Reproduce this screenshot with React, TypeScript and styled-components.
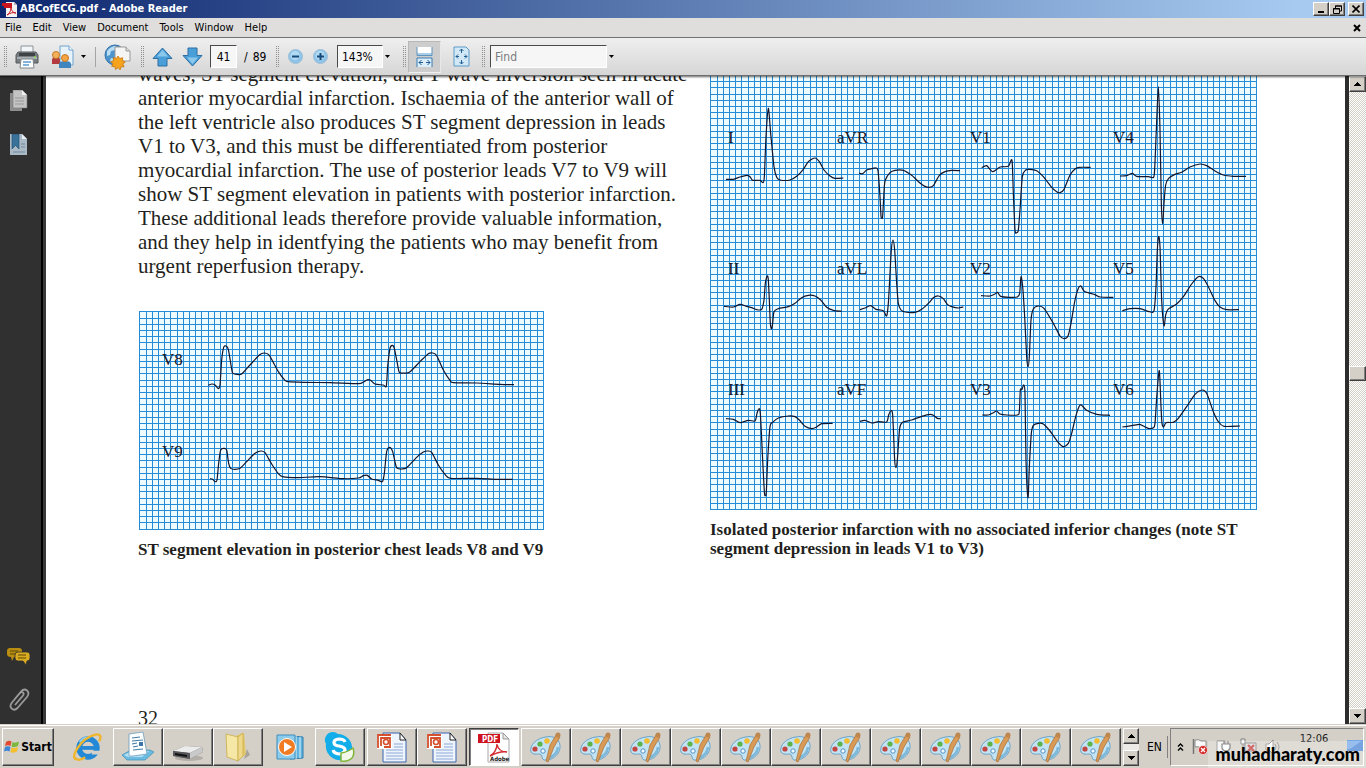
import React from 'react';
import styled, { createGlobalStyle, css } from 'styled-components';

const ui = `'DejaVu Sans Condensed', 'DejaVu Sans', Tahoma, sans-serif`;
const serif = `'Liberation Serif', 'Times New Roman', serif`;

const Global = createGlobalStyle`
  * { box-sizing: border-box; }
  html, body, #root { height: 100%; }
  body { margin: 0; font-family: ${ui}; font-size: 11px; color: #000; overflow: hidden; }
  button, input { font: inherit; color: inherit; margin: 0; padding: 0; border: 0; border-radius: 0; background: none; }
  svg { display: block; flex: none; }
`;

const raised = css`
  background: #d4d0c8;
  border: 1px solid;
  border-color: #fff #404040 #404040 #fff;
  box-shadow: inset -1px -1px 0 #808080;
`;

const Shell = styled.div`
  display: flex;
  flex-direction: column;
  height: 100vh;
`;

const TitleBar = styled.header`
  display: flex;
  align-items: center;
  height: 18px;
  flex: none;
  padding: 0 2px;
  gap: 2px;
  color: #fff;
  background: linear-gradient(90deg, #0d276f 0%, #a6caf0 95%);
`;

const Title = styled.h1`
  flex: 1;
  margin: 0;
  font-size: 11px;
  line-height: 18px;
  font-weight: bold;
`;

const WindowButton = styled.button<{ $apart?: boolean }>`
  ${raised}
  display: grid;
  place-items: center;
  width: 16px;
  height: 14px;
  margin-left: ${(p) => (p.$apart ? 1 : -2)}px;
`;

const MenuBar = styled.nav`
  display: flex;
  align-items: center;
  height: 20px;
  flex: none;
  padding: 0 5px;
  gap: 11px;
  background: #dfdedd;
  border-bottom: 1px solid #77787a;
`;

const MenuItem = styled.button`
  font-size: 11px;
  line-height: 16px;
`;

const CloseDocument = styled.button`
  margin-left: auto;
`;

const ToolBar = styled.div`
  position: relative;
  z-index: 1;
  display: flex;
  align-items: center;
  height: 38px;
  flex: none;
  padding-left: 3px;
  background: linear-gradient(#efefef, #d6d6d6);
  border-bottom: 1px solid #6d6d6d;
  box-shadow: 0 1px 2px rgba(0, 0, 0, 0.6);
`;

const Grip = styled.span<{ $before?: number; $after?: number }>`
  width: 4px;
  height: 22px;
  margin: 0 ${(p) => p.$after ?? 0}px 0 ${(p) => p.$before ?? 0}px;
  background: conic-gradient(#8e8e8e 25%, transparent 0) 0 0 / 2px 2px;
`;

const Divider = styled.span`
  width: 1px;
  height: 20px;
  margin: 0 8px;
  background: #a4a4a4;
`;

const Tool = styled.button<{ $width: number; $pressed?: boolean }>`
  display: grid;
  place-items: center;
  width: ${(p) => p.$width}px;
  height: 32px;
  ${(p) =>
    p.$pressed &&
    css`
      background: #cdcdcd;
      border: 1px solid;
      border-color: #b8b8b8 #e8e8e8 #f0f0f0 #b8b8b8;
    `}
`;

const Field = styled.input<{ $width: number; $center?: boolean; $before?: number }>`
  width: ${(p) => p.$width}px;
  height: 23px;
  margin-left: ${(p) => p.$before ?? 0}px;
  padding: 0 4px;
  text-align: ${(p) => (p.$center ? 'center' : 'left')};
  font-size: 12px;
  background: #f6f6f6;
  border: 1px solid;
  border-color: #4a4a4a #fff #fff #4a4a4a;
  &::placeholder { color: #7c7c7c; opacity: 1; }
`;

const PageCount = styled.span`
  display: flex;
  gap: 5px;
  width: 25px;
  margin: 0 6px 0 7px;
  font-size: 12px;
  line-height: 16px;
  white-space: nowrap;
`;

const Workspace = styled.div`
  display: flex;
  flex: 1;
  min-height: 0;
`;

const SidePanel = styled.aside`
  display: flex;
  flex-direction: column;
  align-items: center;
  width: 46px;
  flex: none;
  padding: 14px 8px 12px 0;
  gap: 22px;
  background: linear-gradient(90deg, #303030 41px, #000 41px 43px, #3a3a3a 43px);
`;

const PanelButton = styled.button<{ $bottom?: boolean }>`
  ${(p) => p.$bottom && 'margin-top: auto;'}
`;

const Page = styled.main`
  display: flex;
  align-items: flex-start;
  flex: 1;
  min-width: 0;
  padding-left: 92px;
  overflow: hidden;
  background: #fff;
  border-right: 4px solid #2d2d2d;
  font-family: ${serif};
  color: #231f20;
`;

const Column = styled.section<{ $width: number }>`
  width: ${(p) => p.$width}px;
  flex: none;
`;

const BodyText = styled.p`
  margin: -14px 0 33px;
  font-size: 21px;
  line-height: 24px;
  white-space: nowrap;
`;

const Figure = styled.figure<{ $indent?: number }>`
  margin: 0;
  svg { margin-left: ${(p) => p.$indent ?? 0}px; }
`;

const Caption = styled.figcaption`
  margin-top: 10px;
  font-size: 17px;
  line-height: 19px;
  font-weight: bold;
  white-space: nowrap;
`;

const Folio = styled.p`
  margin: 147px 0 0;
  font-size: 20px;
  line-height: 24px;
`;

const ScrollBar = styled.div`
  display: flex;
  flex-direction: column;
  width: 17px;
  flex: none;
  background: repeating-conic-gradient(#fff 0 25%, #d4d0c8 0 50%) 0 0 / 2px 2px;
`;

const ScrollButton = styled.button`
  ${raised}
  display: grid;
  place-items: center;
  height: 16px;
  flex: none;
`;

const Track = styled.div<{ $grow: number }>`
  flex: ${(p) => p.$grow};
`;

const Thumb = styled.div`
  ${raised}
  height: 15px;
`;

const TaskBar = styled.footer`
  position: relative;
  display: flex;
  align-items: center;
  height: 44px;
  flex: none;
  padding: 0 2px;
  gap: 2px;
  background: #d4d0c8;
  border-top: 1px solid #d4d0c8;
  box-shadow: inset 0 1px 0 #fff;
`;

const StartButton = styled.button`
  ${raised}
  display: flex;
  align-items: center;
  justify-content: center;
  gap: 1px;
  flex: none;
  width: 52px;
  height: 38px;
  margin-right: 7px;
  font-size: 12px;
  font-weight: bold;
`;

const Task = styled.button<{ $look?: 'flat' | 'active' }>`
  ${raised}
  display: grid;
  place-items: center;
  width: 50px;
  min-width: 0;
  height: 38px;
  ${(p) => p.$look === 'flat' && 'background: none; border-color: transparent; box-shadow: none;'}
  ${(p) =>
    p.$look === 'active' &&
    'background: #fff; border-color: #404040 #fff #fff #404040; box-shadow: inset 1px 1px 0 #808080;'}
`;

const TaskGroup = styled.div`
  display: flex;
  min-width: 0;
`;

const Spinner = styled.div`
  display: flex;
  flex-direction: column;
  justify-content: space-between;
  flex: none;
  width: 16px;
  height: 38px;
  background: #eceae6;
`;

const Language = styled.span`
  flex: none;
  width: 27px;
  padding-left: 6px;
  font-size: 12px;
  line-height: 22px;
  border-right: 1px solid #808080;
`;

const Tray = styled.div`
  display: flex;
  align-items: center;
  flex: 1 0 194px;
  height: 38px;
  padding-left: 6px;
  gap: 8px;
  border: 1px solid;
  border-color: #808080 #fff #fff #808080;
`;

const Clock = styled.time`
  flex: 1;
  align-self: flex-start;
  text-align: center;
  font-size: 11px;
  line-height: 20px;
  color: #222;
`;

const Watermark = styled.div`
  position: absolute;
  right: 0;
  bottom: 0;
  width: 158px;
  height: 27px;
  padding-right: 6px;
  text-align: right;
  font-family: Lato, sans-serif;
  font-size: 18px;
  font-weight: 900;
  line-height: 27px;
  color: #000;
  background: rgba(255, 255, 255, 0.25);
`;

/* ---------- ECG charts ---------- */

type Lead = { name: string; label: [number, number]; origin: [number, number]; pts: string };

/* Smooth curve through the sampled points of a lead (Catmull-Rom to Bezier). */
function curve(pts: string) {
  const p = pts.split(' ').map((s) => s.split(',').map(Number));
  let d = `M${p[0][0]} ${p[0][1]}`;
  for (let i = 0; i < p.length - 1; i++) {
    const a = p[i - 1] ?? p[i];
    const b = p[i];
    const c = p[i + 1];
    const e = p[i + 2] ?? c;
    const k = 8;
    d += `C${b[0] + (c[0] - a[0]) / k} ${b[1] + (c[1] - a[1]) / k} ${c[0] - (e[0] - b[0]) / k} ${c[1] - (e[1] - b[1]) / k} ${c[0]} ${c[1]}`;
  }
  return d;
}

const STEP = 6.205;

function Chart(props: { x: number; y: number; w: number; h: number; rowStart: number; leads: Lead[]; title: string }) {
  const { x, y, w, h, rowStart, leads, title } = props;
  let grid = '';
  for (let i = 0; Math.floor(0.9 + i * STEP) < w; i++) grid += `M${x + Math.floor(0.9 + i * STEP)} ${y}h1v${h}h-1z`;
  for (let i = 0; Math.floor(rowStart + i * STEP) < h; i++) {
    const row = Math.floor(rowStart + i * STEP);
    if (row >= 0) grid += `M${x} ${y + row}h${w}v1h${-w}z`;
  }
  return (
    <svg width={w} height={h} viewBox={`${x} ${y} ${w} ${h}`} role="img" aria-label={title}>
      <rect x={x} y={y} width={w} height={h} fill="#effcff" />
      <path d={grid} fill="#268cd8" shapeRendering="crispEdges" />
      {leads.map((l) => (
        <g key={l.name}>
          <text x={l.label[0]} y={l.label[1]} fontFamily={serif} fontSize="17" fill="#1a1626">
            {l.name}
          </text>
          <g transform={`translate(${l.origin[0]} ${l.origin[1]}) scale(${1 / 3})`}>
            <path d={curve(l.pts)} fill="none" stroke="#14142a" strokeWidth="3.6" />
          </g>
        </g>
      ))}
    </svg>
  );
}

const posteriorLeads: Lead[] = [
  { name: 'V8', label: [162, 365], origin: [130, 300], pts: '235,256 246,252 256,256 265,266 270,255 275,180 281,142 288,138 295,148 303,195 308,219 320,223 335,222 360,195 388,165 403,159 418,166 445,215 465,241 475,245 520,247 600,248 685,251 700,246 713,239 722,241 735,252 760,255 769,258 773,200 780,145 787,136 793,145 802,190 808,217 820,219 838,217 870,185 895,161 908,159 920,167 940,210 960,241 970,248 1040,249 1110,253 1152,254' },
  { name: 'V9', label: [162, 457], origin: [130, 300], pts: '240,536 248,538 255,545 261,540 266,490 272,450 282,445 290,450 296,490 302,505 315,508 330,505 350,485 375,460 392,453 405,458 425,492 445,521 458,530 500,533 570,530 640,536 685,534 700,527 712,526 725,537 745,541 757,545 763,520 770,455 779,442 788,455 797,495 802,505 815,507 830,503 860,472 880,456 893,453 905,457 925,495 945,523 962,535 1040,535 1100,538 1148,538' },
];

const standardLeads: Lead[] = [
  { name: 'I', label: [728, 143], origin: [700, 70], pts: '78,328 100,328 120,321 140,316 150,320 158,331 180,331 189,338 193,320 198,200 205,115 212,190 222,290 230,322 240,330 270,330 290,319 310,298 325,275 345,264 358,275 372,300 390,318 405,325 430,324' },
  { name: 'aVR', label: [837, 143], origin: [700, 70], pts: '477,310 488,311 500,300 515,296 527,294 534,302 540,380 543,438 545,444 548,438 553,350 556,330 570,308 585,301 610,301 635,316 660,339 675,349 688,352 700,347 718,316 735,305 755,301 780,302' },
  { name: 'II', label: [728, 274], origin: [700, 280], pts: '72,79 100,81 120,73 140,79 155,83 170,89 185,88 192,60 196,10 202,-12 205,0 208,60 211,130 215,147 218,130 222,95 235,86 265,80 285,70 305,53 325,46 345,48 362,60 380,82 400,91 425,94' },
  { name: 'aVL', label: [837, 274], origin: [700, 280], pts: '480,89 495,84 512,77 528,88 550,92 560,108 565,70 569,0 574,-90 579,-120 584,-90 590,10 595,70 603,90 615,96 645,97 665,88 688,67 700,53 715,48 730,56 742,73 755,80 775,84 790,81' },
  { name: 'III', label: [728, 395], origin: [700, 280], pts: '78,416 100,418 120,428 145,421 165,423 171,400 176,387 181,400 188,540 193,635 196,647 199,635 203,540 210,440 218,427 235,414 265,408 285,410 298,420 315,439 335,446 350,441 365,431 398,430' },
  { name: 'aVF', label: [837, 395], origin: [700, 280], pts: '480,424 495,421 515,429 535,425 560,426 566,405 572,393 578,405 584,540 588,563 592,540 599,445 608,427 635,420 665,409 690,403 702,407 712,415 722,416' },
  { name: 'V1', label: [970, 143], origin: [960, 70], pts: '65,293 80,287 98,305 120,291 145,289 156,271 160,370 165,480 170,488 175,480 180,420 187,320 197,300 210,298 230,302 250,320 275,352 290,365 300,368 312,358 330,315 345,297 358,292 392,292' },
  { name: 'V4', label: [1113, 143], origin: [960, 70], pts: '480,318 500,317 517,310 530,319 565,320 575,322 583,312 589,180 595,50 600,180 604,400 608,462 612,400 617,345 626,325 645,313 665,307 690,291 720,282 740,287 765,303 790,315 820,319 858,319' },
  { name: 'V2', label: [970, 274], origin: [960, 280], pts: '63,47 90,48 105,42 113,37 122,49 150,52 172,51 179,40 183,-10 188,20 194,110 200,230 204,260 208,230 213,120 220,87 235,78 252,85 280,130 300,168 312,176 324,168 333,130 345,60 355,25 363,18 373,34 405,44 420,51 460,52' },
  { name: 'V5', label: [1113, 274], origin: [960, 280], pts: '487,92 510,86 540,86 568,95 582,92 588,20 592,-90 596,-130 600,-100 605,60 612,137 617,105 624,88 650,72 670,50 695,12 715,-10 730,-5 745,20 765,62 780,81 800,89 837,89' },
  { name: 'V3', label: [970, 395], origin: [960, 280], pts: '67,405 85,405 100,398 110,393 120,402 140,405 172,405 178,395 181,330 186,328 191,315 195,340 198,540 204,653 208,560 214,460 220,436 235,430 250,432 270,453 295,488 310,500 325,490 335,460 347,410 357,380 364,375 380,391 410,403 450,406' },
  { name: 'V6', label: [1113, 395], origin: [960, 280], pts: '487,441 515,437 538,433 550,438 565,445 580,443 585,430 591,340 598,272 603,380 606,430 611,441 618,428 640,427 655,415 680,380 705,343 727,330 740,340 760,395 775,425 792,439 840,438' },
];

/* ---------- icons ---------- */

const Caret = ({ up }: { up?: boolean }) => (
  <svg width="7" height="4" viewBox="0 0 7 4" shapeRendering="crispEdges">
    <path d={up ? 'M0 4L3.5 0L7 4z' : 'M0 0h7L3.5 4z'} fill="#000" />
  </svg>
);

const SmallCaret = () => (
  <svg width="5" height="3" viewBox="0 0 5 3"><path d="M0 0h5L2.500 3z" fill="#000" /></svg>
);

const PdfMark = () => (
  <svg width="16" height="16" viewBox="0 0 16 16">
    <path d="M4 1h8l3 3v12H4z" fill="#f4f2f2" />
    <path d="M12 1l3 3h-3z" fill="#bbb" />
    <path d="M0 2h10v5H2V5H0z" fill="#c8141c" />
    <path d="M5 14c2-1 4-4 4-7 1 4 3 5 5 5-3-1-6 0-9 2z" fill="none" stroke="#c8141c" />
  </svg>
);

const Printer = () => (
  <svg width="24" height="24" viewBox="0 0 24 24">
    <path d="M6 1h12v8H6z" fill="#f3f6f8" stroke="#8b9297" />
    <path d="M3 7h18l2 3v8H1v-8z" fill="#777d80" stroke="#54585b" />
    <path d="M4 8h16v3H4z" fill="#3e4346" />
    <path d="M2 12h20v2H2z" fill="#a9afb2" />
    <path d="M6 14h12l1 9H5z" fill="#fff" stroke="#7f878c" />
    <path d="M8 17h8M8 20h6" stroke="#5b9bd0" strokeWidth="1.500" />
    <path d="M19 12h2" stroke="#8de04c" strokeWidth="1.500" />
  </svg>
);

const Share = () => (
  <svg width="24" height="24" viewBox="0 0 24 24">
    <path d="M9 1h9l4 4v15H9z" fill="#e8f2fb" stroke="#6fa3cf" />
    <path d="M18 1v4h4" fill="#fff" stroke="#6fa3cf" />
    <path d="M1 19v-4q0-3 4-3t4 3v4z" fill="#b33a3f" />
    <circle cx="5" cy="10" r="3.500" fill="#f2b15a" stroke="#c67a22" />
    <path d="M8 23v-4q0-3 6-3t6 3v4z" fill="#3f86bf" />
    <circle cx="14" cy="13" r="3.500" fill="#f5a545" stroke="#c67a22" />
  </svg>
);

const GlobePage = () => (
  <svg width="28" height="26" viewBox="0 0 28 26">
    <circle cx="11" cy="11" r="10" fill="#4d93cb" stroke="#3573a8" />
    <path d="M3 7q4-5 9-5l-1 4-4 1-1 4-3 1zM7 14l4 1v4l-2 1-3-3z" fill="#b8dcf3" />
    <path d="M11 3h11l4 4v10H11z" fill="#f5f5f3" stroke="#9a9a98" />
    <path d="M22 3v4h4" fill="#ddd" stroke="#9a9a98" />
    <path d="M14 12l1.700 2.600 3-.9-.3 3.100 2.900 1.200-2.500 1.900 1.300 2.800-3.100.1-.9 3-2.100-2.200-2.400 2-.8-3-3.100-.2 1.400-2.800-2.500-1.800 3-1.100-.3-3.100 3 .9z" fill="#f5a21d" stroke="#c87609" strokeWidth=".8" />
  </svg>
);

const Arrow = ({ down }: { down?: boolean }) => (
  <svg width="21" height="20" viewBox="0 0 21 20">
    <g transform={down ? 'rotate(180 10.500 10)' : undefined}>
      <path d="M10.500 1L20 11.500h-5V19H6v-7.500H1z" fill="#4a9fd8" stroke="#2d6fa3" strokeLinejoin="round" />
      <path d="M10.500 3L16 9.500H5z" fill="#8cc8ec" />
    </g>
  </svg>
);

const ZoomDot = ({ plus }: { plus?: boolean }) => (
  <svg width="15" height="15" viewBox="0 0 15 15">
    <circle cx="7.500" cy="7.500" r="7" fill="#8fc4e8" stroke="#9dbfd8" />
    <circle cx="7" cy="6.500" r="4.500" fill="#b0daf3" />
    <path d={plus ? 'M4 7.500h7M7.500 4v7' : 'M4 7.500h7'} stroke="#174a78" strokeWidth="2" />
  </svg>
);

const FitWidth = () => (
  <svg width="17" height="20" viewBox="0 0 17 20">
    <path d="M1 0h15v8H1z" fill="#fff" />
    <path d="M1 6h15v3H1z" fill="#a8cde8" />
    <path d="M1 0v8.500h15V0" fill="none" stroke="#5e93bd" />
    <path d="M1 11h15v9H1z" fill="#dceefa" />
    <path d="M1 20v-9h15v9" fill="none" stroke="#3a7db3" />
    <path d="M3 15.500h4M10 15.500h4M5.500 13L3 15.500 5.500 18M11.500 13l2.500 2.500-2.500 2.500" fill="none" stroke="#1d5c94" />
  </svg>
);

const FitPage = () => (
  <svg width="17" height="21" viewBox="0 0 17 21">
    <path d="M1 1h12l3 3v16H1z" fill="#d3e8f7" stroke="#5d9bc9" />
    <path d="M8.500 3v4M6.500 5l2-2 2 2M8.500 18v-4M6.500 16l2 2 2-2M3 10.500h3M5 8.500l-2 2 2 2M14 10.500h-3M12 8.500l2 2-2 2" fill="none" stroke="#1f5f96" />
  </svg>
);

const PagesIcon = () => (
  <svg width="20" height="22" viewBox="0 0 20 22">
    <path d="M1 3h12v18H1z" fill="#8d8d8d" />
    <path d="M4 0h9l5 5v13H4z" fill="#c4c4c4" stroke="#777" strokeWidth=".6" />
    <path d="M13 0v5h5z" fill="#f0f0f0" />
    <path d="M6 8h9M6 11h9M6 14h9" stroke="#999" />
  </svg>
);

const BookmarkIcon = () => (
  <svg width="20" height="22" viewBox="0 0 20 22">
    <path d="M1 0h12l5 5v16H1z" fill="#a9bac6" />
    <path d="M13 0v5h5z" fill="#e6eef3" />
    <path d="M3 0h7v15l-3.500-3.500L3 15z" fill="#3a7199" stroke="#234c6b" strokeWidth=".6" />
    <path d="M12 10h4M12 13h4M4 18h12" stroke="#74899a" />
  </svg>
);

const CommentsIcon = () => (
  <svg width="24" height="19" viewBox="0 0 24 19">
    <path d="M3 1h9q3 0 3 3v3q0 3-3 3H7l-2 4-1-4q-4 0-4-3V4q0-3 3-3z" fill="#b98d12" />
    <path d="M3 4h8M3 7h6" stroke="#5f4806" />
    <path d="M11 5h9q3 0 3 3v3q0 3-3 3l-1 4-3-4h-5q-3 0-3-3V8q0-3 3-3z" fill="#d9ab20" stroke="#303030" strokeWidth=".8" />
    <path d="M11 8h8M11 11h8" stroke="#5f4806" />
  </svg>
);

const ClipIcon = () => (
  <svg width="22" height="24" viewBox="0 0 22 24">
    <path d="M7 17l8-9.500c2-2.500-1-4.500-3-2.500L4 14.500c-4 5 1.500 9.500 5.500 5.500L19 9c4-5.500-2-10-6-5.500L6 12" fill="none" stroke="#9b9b9b" strokeWidth="1.800" />
  </svg>
);

const WindowsFlag = () => (
  <svg width="16" height="16" viewBox="0 0 16 16">
    <path d="M2 3q3-2 5.500-.5L6.500 7Q4 5.500 1 7z" fill="#e2492f" />
    <path d="M8.500 3Q11 4.500 15 2.500l-1 4.500q-4 2-6.500.5z" fill="#7bb83c" />
    <path d="M1 8q3-1.500 5.500 0l-1 4.500Q3 11 0 12.500z" fill="#3f86d6" />
    <path d="M7.500 8.500q3 1.500 6.500-.5l-1 4.500q-3.500 2-6.500.5z" fill="#f5bf2b" />
  </svg>
);

const Explorer = () => (
  <svg width="32" height="30" viewBox="0 0 34 32">
    <circle cx="17" cy="17" r="9.500" fill="none" stroke="#2389d7" strokeWidth="6" />
    <path d="M8 15h20v4H8z" fill="#2389d7" />
    <path d="M21 20h11v4H21z" fill="#d4d0c8" />
    <path d="M8 11q4-6 11-5" fill="none" stroke="#8fd0f6" strokeWidth="2" />
    <path d="M29 10q4-9-5-7Q13 6 6 17T5 29q3 2 9-2" fill="none" stroke="#f0b52a" strokeWidth="2.500" />
  </svg>
);

const Notepad = () => (
  <svg width="32" height="32" viewBox="0 0 32 32">
    <path d="M0 24l9-5h19l4 2-9 8H5z" fill="#6cbbe0" stroke="#3c8db8" strokeWidth=".7" />
    <path d="M2 24l8-4h17l-7 6H6z" fill="#b5e1f3" />
    <path d="M7 3l14-2 4 22-14 2H7z" fill="#fbfdff" stroke="#6d9dbb" strokeWidth=".8" />
    <path d="M10 7l8-1M10 10l11-1M10 13l5-1M11 16l5-1M11 19l10-1" stroke="#417ba5" />
    <path d="M17 11h4v4h-4z" fill="#3f75a6" />
  </svg>
);

const Drive = () => (
  <svg width="32" height="32" viewBox="0 0 32 32">
    <ellipse cx="17" cy="27" rx="14" ry="3" fill="#b3afa8" />
    <path d="M1 20l12-5 17 1 1 5-13 7-17-3z" fill="#6b6b6b" />
    <path d="M1 20l12-5 17 1-12 6z" fill="#ececec" />
    <path d="M1 20l17 2v6L1 25z" fill="#55555a" />
    <path d="M3 22l12 2v2L3 24z" fill="#111" />
    <path d="M18 22l12-6 1 5-13 7z" fill="#c9c9c9" />
  </svg>
);

const Folder = () => (
  <svg width="28" height="32" viewBox="0 0 28 32">
    <path d="M13 4l7-2 2 22-7 3z" fill="#e1c96a" />
    <path d="M2 3l12 3v24L3 26z" fill="#f5e7a6" stroke="#c9ab4a" strokeWidth=".8" />
    <path d="M14 6l5-4v23l-5 5z" fill="#eed98a" stroke="#c9ab4a" strokeWidth=".8" />
    <path d="M23 18l3 6-6 4z" fill="#a9a49a" />
  </svg>
);

const MediaPlayer = () => (
  <svg width="28" height="28" viewBox="0 0 28 28">
    <path d="M14 3l13 1v21l-13 1z" fill="#5fb2dd" stroke="#2f7fb0" />
    <path d="M20 3v23M24 4v21" stroke="#e3f3fb" />
    <path d="M1 2h18v24H1z" fill="#8dcbeb" stroke="#3f8dbd" />
    <circle cx="11" cy="14" r="8.500" fill="#f07b22" stroke="#fff" />
    <path d="M8 9l8 5-8 5z" fill="#fff" />
  </svg>
);

const Skype = () => (
  <svg width="32" height="32" viewBox="0 0 32 32">
    <path d="M9 1a8 8 0 00-7 12A14 14 0 0018 29a8 8 0 0010-11A14 14 0 0014 3q-2-2-5-2z" fill="#13aeea" />
    <path d="M21 11q-1-3-6-3-5 .5-5 3.500 0 3 5 3.500 6 1 6 4-1 4-6 4-5-.5-6-4" fill="none" stroke="#fff" strokeWidth="3.200" />
    <path d="M17 22q7-1 12-5 2 6-1 10-4 4-11 3z" fill="#f4f8ea" stroke="#7eb53a" strokeWidth="1.500" />
  </svg>
);

const PowerPoint = () => (
  <svg width="32" height="32" viewBox="0 0 32 32">
    <path d="M7 2h17l6 7v22H7z" fill="#edf4fc" stroke="#3d64ae" />
    <path d="M24 2v7h6z" fill="#fff" stroke="#222" />
    <path d="M10 19h17M10 22h17M10 25h17M10 28h17M18 16h9M18 13h9" stroke="#8fa9d8" />
    <path d="M1 3h15v15H1z" fill="#fff" />
    <path d="M2 17V4h13M5 15V7h9v9H8" fill="none" stroke="#d4502e" strokeWidth="1.800" />
    <circle cx="10" cy="11" r="2.500" fill="#fff" stroke="#d4502e" strokeWidth="1.600" />
  </svg>
);

const AcrobatDoc = () => (
  <svg width="32" height="32" viewBox="0 0 32 32">
    <path d="M10 2h15l6 6v23H10z" fill="#fff" stroke="#a8a8a8" />
    <path d="M25 2v6h6z" fill="#e6e6e6" stroke="#999" />
    <path d="M0 3h22v9H0z" fill="#cf1420" />
    <text x="4" y="11" fontFamily={ui} fontSize="8" fontWeight="bold" fill="#fff">PDF</text>
    <path d="M12 25c4-2 7-7 7-12 1 6 5 8 10 8-6-1-11 1-17 4z" fill="none" stroke="#d32b30" strokeWidth="1.400" />
    <text x="12" y="30" fontFamily={ui} fontSize="6" fontWeight="bold" fill="#222">Adobe</text>
  </svg>
);

const Palette = () => (
  <svg width="34" height="32" viewBox="0 0 34 32">
    <path d="M17 6c8-2 15 3 14 11-1 7-8 13-16 12-3-1-1-5-4-6-3 0-7 1-9-2C0 14 8 7 17 6z" fill="#c3e2f2" stroke="#6aa4c8" />
    <path d="M19 27q9-2 10-11" fill="none" stroke="#7fb9da" strokeWidth="2.500" />
    <circle cx="6" cy="18" r="2.600" fill="#c4473f" />
    <circle cx="11" cy="13" r="2.600" fill="#5bb44b" />
    <circle cx="18" cy="10" r="2.800" fill="#f1bd32" />
    <circle cx="14" cy="20" r="2.200" fill="#f2fafd" stroke="#4e91c2" />
    <path d="M27 4l4 2-6 10-6 15-2-1 4-16z" fill="#d99a56" stroke="#a86f36" strokeWidth=".7" />
    <circle cx="29" cy="4" r="2.500" fill="#bf8750" />
  </svg>
);

const Chevrons = () => (
  <svg width="7" height="10" viewBox="0 0 7 10">
    <path d="M1 4.500L3.500 2 6 4.500M1 8.500L3.500 6 6 8.500" fill="none" stroke="#000" strokeWidth="1.400" />
  </svg>
);

const FlagAlert = () => (
  <svg width="16" height="17" viewBox="0 0 16 17">
    <path d="M1.500 1v15" stroke="#777" strokeWidth="1.500" />
    <path d="M3 2q4-1 6 1h5v7H9Q6 8 3 9z" fill="#fafafa" stroke="#8a8a8a" />
    <circle cx="11" cy="12" r="4.500" fill="#d22a2a" stroke="#fff" strokeWidth=".6" />
    <path d="M9 10l4 4M13 10l-4 4" stroke="#fff" strokeWidth="1.400" />
  </svg>
);

const Plug = () => (
  <svg width="16" height="17" viewBox="0 0 16 17">
    <path d="M1 3h8v12H1z" fill="#f3f3f3" stroke="#8b8b8b" />
    <path d="M6 6h8v4q-1 3-4 3t-4-3zM8 6V3M12 6V3M10 13v3" fill="#fff" stroke="#666" strokeWidth="1.200" />
  </svg>
);

const NetworkOff = () => (
  <svg width="17" height="17" viewBox="0 0 17 17">
    <path d="M1 1h4v5H1zM3 6v8" fill="#f4f4f4" stroke="#7b7b7b" />
    <path d="M5 5h11v8H5z" fill="#dcdcdc" stroke="#7b7b7b" />
    <path d="M8 7l6 6M14 7l-6 6" stroke="#c23c3c" strokeWidth="2.400" />
  </svg>
);

const Speaker = () => (
  <svg width="16" height="16" viewBox="0 0 16 16">
    <path d="M1 5h3l4-4v14l-4-4H1z" fill="#fff" stroke="#888" />
    <path d="M10 5q2 3 0 6M12 3q4 5 0 10" fill="none" stroke="#8a8a8a" />
  </svg>
);

const Desktop = () => (
  <svg width="16" height="14" viewBox="0 0 16 14">
    <path d="M0 0h16v11H0z" fill="#4a86d6" />
    <path d="M0 0h16L3 9H0z" fill="#76a8e8" />
  </svg>
);

const menus = ['File', 'Edit', 'View', 'Document', 'Tools', 'Window', 'Help'];

const bodyLines = [
  'waves, ST segment elevation, and T wave inversion seen in acute',
  'anterior myocardial infarction. Ischaemia of the anterior wall of',
  'the left ventricle also produces ST segment depression in leads',
  'V1 to V3, and this must be differentiated from posterior',
  'myocardial infarction. The use of posterior leads V7 to V9 will',
  'show ST segment elevation in patients with posterior infarction.',
  'These additional leads therefore provide valuable information,',
  'and they help in identfying the patients who may benefit from',
  'urgent reperfusion therapy.',
];

export default function App() {
  return (
    <Shell>
      <Global />
      <TitleBar>
        <PdfMark />
        <Title>ABCofECG.pdf - Adobe Reader</Title>
        <WindowButton aria-label="Minimize">
          <svg width="8" height="8" viewBox="0 0 8 8"><path d="M1 6h6v2H1z" /></svg>
        </WindowButton>
        <WindowButton aria-label="Restore">
          <svg width="9" height="9" viewBox="0 0 9 9"><path d="M2.500 3V1h6v5h-2M2 1h7M.5 3.500h6v5h-6zM0 4h7" fill="none" stroke="#000" /></svg>
        </WindowButton>
        <WindowButton aria-label="Close" $apart>
          <svg width="8" height="8" viewBox="0 0 8 8"><path d="M.5.5l7 7M7.500.5l-7 7" stroke="#000" strokeWidth="1.600" /></svg>
        </WindowButton>
      </TitleBar>
      <MenuBar>
        {menus.map((m) => (
          <MenuItem key={m}>{m}</MenuItem>
        ))}
        <CloseDocument aria-label="Close document">
          <svg width="8" height="8" viewBox="0 0 8 8"><path d="M1 1l6 6M7 1L1 7" stroke="#000" strokeWidth="2" /></svg>
        </CloseDocument>
      </MenuBar>
      <ToolBar>
        <Grip />
        <Tool $width={40} aria-label="Print"><Printer /></Tool>
        <Tool $width={32} aria-label="Share"><Share /></Tool>
        <Tool $width={8} aria-label="Share options"><SmallCaret /></Tool>
        <Divider />
        <Tool $width={28} aria-label="Create PDF online"><GlobePage /></Tool>
        <Grip $before={8} $after={3} />
        <Tool $width={30} aria-label="Previous page"><Arrow /></Tool>
        <Tool $width={30} aria-label="Next page"><Arrow down /></Tool>
        <Field $width={27} $center $before={3} defaultValue="41" aria-label="Page number" />
        <PageCount><span>/</span><span>89</span></PageCount>
        <Grip $after={4} />
        <Tool $width={25} aria-label="Zoom out"><ZoomDot /></Tool>
        <Tool $width={25} aria-label="Zoom in"><ZoomDot plus /></Tool>
        <Field $width={46} $before={4} defaultValue="143%" aria-label="Zoom level" />
        <Tool $width={8} aria-label="Zoom levels"><SmallCaret /></Tool>
        <Grip $before={11} $after={2} />
        <Tool $width={33} $pressed aria-label="Fit width"><FitWidth /></Tool>
        <Tool $width={40} aria-label="Fit page"><FitPage /></Tool>
        <Grip $after={5} />
        <Field $width={117} placeholder="Find" aria-label="Find" />
        <Tool $width={8} aria-label="Find options"><SmallCaret /></Tool>
      </ToolBar>
      <Workspace>
        <SidePanel>
          <PanelButton aria-label="Pages"><PagesIcon /></PanelButton>
          <PanelButton aria-label="Bookmarks"><BookmarkIcon /></PanelButton>
          <PanelButton aria-label="Comments" $bottom><CommentsIcon /></PanelButton>
          <PanelButton aria-label="Attachments"><ClipIcon /></PanelButton>
        </SidePanel>
        <Page>
          <Column $width={572}>
            <BodyText>
              {bodyLines.map((l) => (
                <React.Fragment key={l}>{l}<br /></React.Fragment>
              ))}
            </BodyText>
            <Figure $indent={1}>
              <Chart x={139} y={311} w={405} h={219} rowStart={0.9} leads={posteriorLeads} title="Leads V8 and V9" />
              <Caption>ST segment elevation in posterior chest leads V8 and V9</Caption>
            </Figure>
            <Folio>32</Folio>
          </Column>
          <Column $width={547}>
            <Figure>
              <Chart x={710} y={76} w={547} h={434} rowStart={-0.55} leads={standardLeads} title="Twelve lead ECG" />
              <Caption>
                Isolated posterior infarction with no associated inferior changes (note ST
                <br />
                segment depression in leads V1 to V3)
              </Caption>
            </Figure>
          </Column>
        </Page>
        <ScrollBar>
          <ScrollButton aria-label="Scroll up"><Caret up /></ScrollButton>
          <Track $grow={274} />
          <Thumb />
          <Track $grow={326} />
          <ScrollButton aria-label="Scroll down"><Caret /></ScrollButton>
        </ScrollBar>
      </Workspace>
      <TaskBar>
        <StartButton><WindowsFlag />Start</StartButton>
        <TaskGroup>
          <Task $look="flat" aria-label="Internet Explorer"><Explorer /></Task>
          <Task aria-label="Notepad"><Notepad /></Task>
          <Task aria-label="Drive"><Drive /></Task>
          <Task aria-label="Folder"><Folder /></Task>
        </TaskGroup>
        <TaskGroup>
          <Task $look="flat" aria-label="Media Player"><MediaPlayer /></Task>
          <Task aria-label="Skype"><Skype /></Task>
        </TaskGroup>
        <TaskGroup>
          <Task aria-label="Presentation 1"><PowerPoint /></Task>
          <Task aria-label="Presentation 2"><PowerPoint /></Task>
        </TaskGroup>
        <TaskGroup>
          <Task $look="active" aria-label="Adobe Reader"><AcrobatDoc /></Task>
        </TaskGroup>
        <TaskGroup>
          {Array.from({ length: 12 }, (_, i) => (
            <Task key={i} aria-label={`Paint ${i + 1}`}><Palette /></Task>
          ))}
        </TaskGroup>
        <Spinner>
          <ScrollButton aria-label="Previous tasks"><Caret up /></ScrollButton>
          <ScrollButton aria-label="Next tasks"><Caret /></ScrollButton>
        </Spinner>
        <Language>EN</Language>
        <Tray>
          <Chevrons />
          <FlagAlert />
          <Plug />
          <NetworkOff />
          <Speaker />
          <Clock>12:06</Clock>
          <Desktop />
        </Tray>
        <Watermark>muhadharaty.com</Watermark>
      </TaskBar>
    </Shell>
  );
}
